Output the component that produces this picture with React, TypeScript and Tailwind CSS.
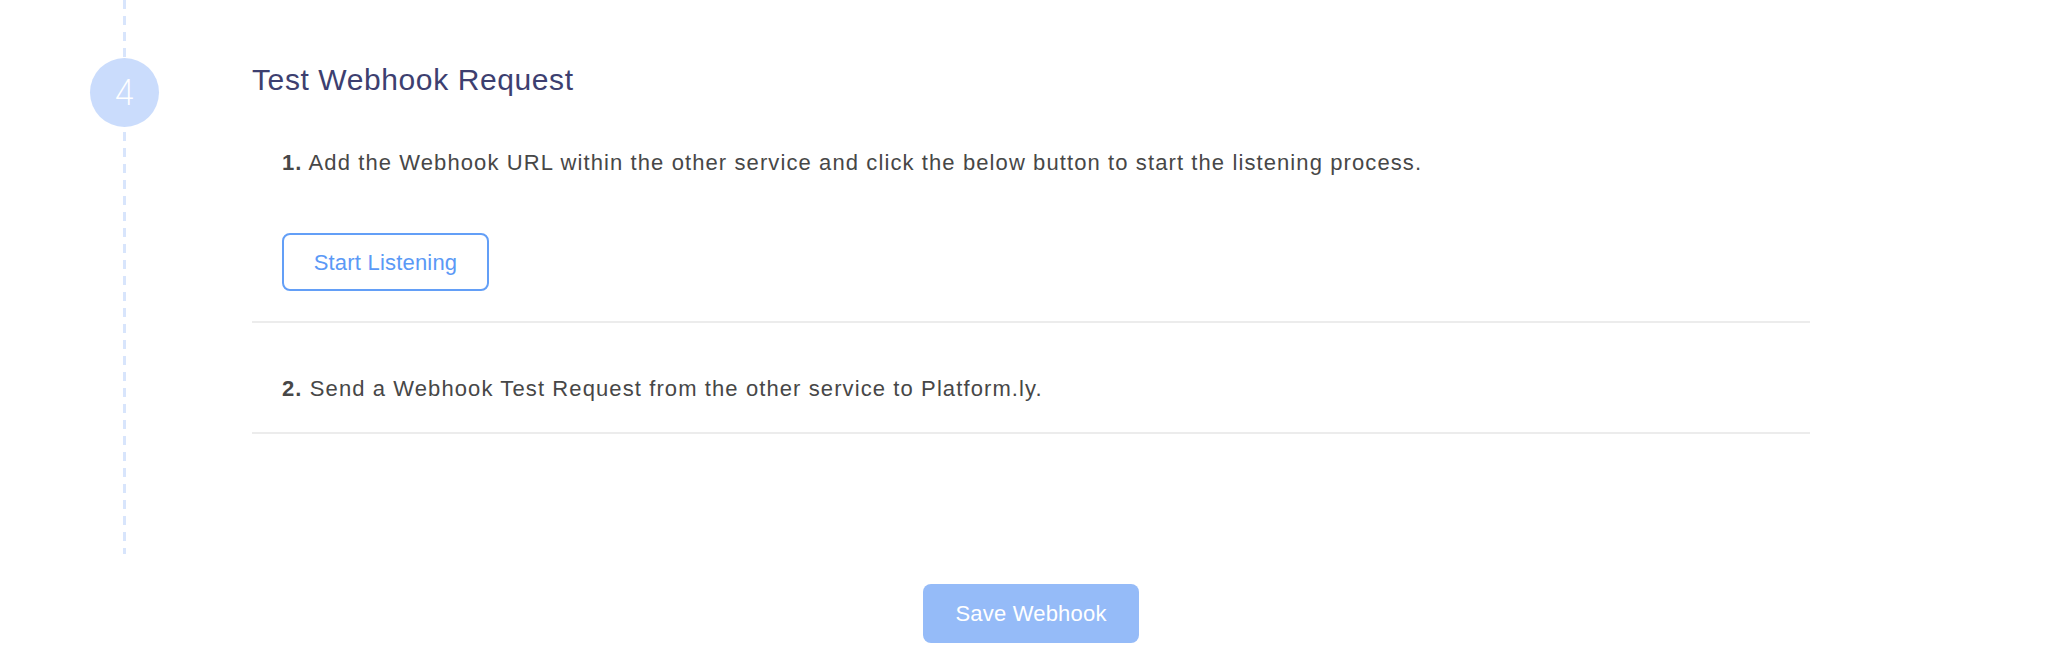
const font = { fontFamily: '"Liberation Sans", Arial, sans-serif' };

function Timeline() {
  return (
    <div className="flex w-[252px] shrink-0 flex-col items-center pr-[3px]">
      <div className="h-[58px] w-[3px] bg-[repeating-linear-gradient(to_bottom,#d8e5fc_0px,#d8e5fc_9px,transparent_9px,transparent_16px)]" />
      <div className="flex size-[69px] items-center justify-center rounded-full bg-[#cadcfc]">
        <span className="text-[35px] font-extralight leading-none text-white" style={{ fontFamily: "Inter, sans-serif" }}>
          4
        </span>
      </div>
      <div className="w-[3px] flex-1 bg-[repeating-linear-gradient(to_bottom,transparent_0px,transparent_5px,#d8e5fc_5px,#d8e5fc_14px,transparent_14px,transparent_16px)]" />
    </div>
  );
}

export default function App() {
  return (
    <div className="h-[658px] w-full overflow-hidden bg-white" style={font}>
      <div className="flex h-[554px]">
        <Timeline />
        <div className="w-[1558px] shrink-0 pt-[62px]">
          <h2 className="text-[30px] leading-[36px] tracking-[0.6px] text-[#3d3f70]">Test Webhook Request</h2>

          <div className="border-b-2 border-[#ececec] pb-[30px] pl-[30px] pt-[51px]">
            <p className="text-[22px] leading-[28px] tracking-[1.1px] text-[#474747]">
              <span className="font-bold">1.</span> Add the Webhook URL within the other service and click the below button to
              start the listening process.
            </p>
            <button className="mt-[56px] h-[58px] w-[207px] rounded-lg border-2 border-[#639ff7] bg-white text-[22px] tracking-[0.2px] text-[#5b99f6]">
              Start Listening
            </button>
          </div>

          <div className="border-b-2 border-[#ececec] pb-[29px] pl-[30px] pt-[52px]">
            <p className="text-[22px] leading-[28px] tracking-[1.1px] text-[#474747]">
              <span className="font-bold">2.</span> Send a Webhook Test Request from the other service to Platform.ly.
            </p>
          </div>
        </div>
      </div>

      <div className="ml-[252px] flex w-[1558px] justify-center pt-[30px]">
        <button className="h-[59px] w-[216px] rounded-lg bg-[#95bbf8] text-[22px] tracking-[0.2px] text-white">
          Save Webhook
        </button>
      </div>
    </div>
  );
}
